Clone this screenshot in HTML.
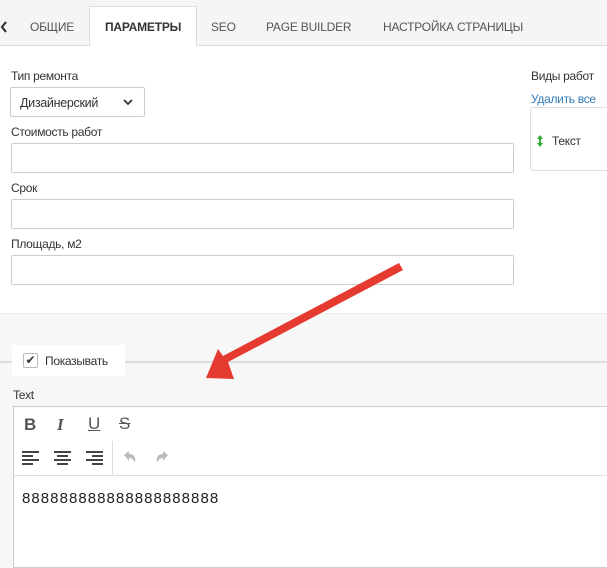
<!DOCTYPE html><html><head><meta charset="utf-8"><style>
body{margin:0;width:607px;height:559px;overflow:hidden;background:#f7f7f7;font-family:"Liberation Sans",sans-serif;position:relative;color:#333}
.a{position:absolute}
.tab{position:absolute;top:20px;font-size:12px;color:#555;letter-spacing:-0.2px}
.lbl{position:absolute;font-size:12px;color:#333;letter-spacing:-0.3px}
.inp{position:absolute;left:11px;width:501px;height:28px;border:1px solid #ccc;background:#fff;border-radius:2px}
.tb{position:absolute;font-size:17px;color:#555;font-weight:bold}
</style></head><body>
<div class="a" style="left:0;top:0;width:607px;height:45px;background:#f5f5f5;border-bottom:1px solid #ddd"></div>
<div class="a" style="left:89px;top:6px;width:106px;height:40px;background:#fff;border:1px solid #ddd;border-bottom:none"></div>
<svg class="a" style="left:0;top:21px" width="8" height="12"><path d="M6 1L2 6l4 5" stroke="#333" stroke-width="2.2" fill="none"/></svg>
<div class="tab" style="left:30px">ОБЩИЕ</div>
<div class="tab" style="left:105px;font-weight:bold;color:#333">ПАРАМЕТРЫ</div>
<div class="tab" style="left:211px">SEO</div>
<div class="tab" style="left:266px">PAGE BUILDER</div>
<div class="tab" style="left:383px">НАСТРОЙКА СТРАНИЦЫ</div>
<div class="a" style="left:0;top:46px;width:607px;height:267px;background:#fff;border-bottom:1px solid #eee"></div>
<div class="lbl" style="left:11px;top:69px">Тип ремонта</div>
<div class="a" style="left:10px;top:87px;width:133px;height:28px;border:1px solid #ccc;border-radius:2px;background:#fff;font-size:12.5px;letter-spacing:-0.3px"><span style="position:absolute;left:9px;top:8px">Дизайнерский</span></div>
<svg class="a" style="left:122px;top:98px" width="12" height="8"><path d="M2 2l4 4 4-4" stroke="#333" stroke-width="1.8" fill="none"/></svg>
<div class="lbl" style="left:11px;top:125px">Стоимость работ</div>
<div class="inp" style="top:143px"></div>
<div class="lbl" style="left:11px;top:181px">Срок</div>
<div class="inp" style="top:199px"></div>
<div class="lbl" style="left:11px;top:237px">Площадь, м2</div>
<div class="inp" style="top:255px"></div>
<div class="lbl" style="left:531px;top:69px">Виды работ</div>
<div class="lbl" style="left:531px;top:92px;color:#337ab7">Удалить все</div>
<div class="a" style="left:530px;top:107px;width:80px;height:62px;border:1px solid #ddd;border-radius:3px;background:#fff"></div>
<svg class="a" style="left:537px;top:134px" width="6" height="14"><path d="M3 1L0 5h6zM3 13L0 9h6z" fill="#3a3"/><rect x="2" y="4" width="2" height="6" fill="#3a3"/></svg>
<div class="lbl" style="left:552px;top:134px">Текст</div>
<div class="a" style="left:0;top:361px;width:607px;height:2px;background:#ddd"></div>
<div class="a" style="left:12px;top:345px;width:113px;height:31px;background:#fff"></div>
<div class="a" style="left:23px;top:353px;width:13px;height:13px;border:1px solid #bbb;border-radius:2px;background:#fff;font-size:12px;line-height:13px;text-align:center">&#x2714;</div>
<div class="lbl" style="left:45px;top:354px">Показывать</div>
<div class="lbl" style="left:13px;top:388px">Text</div>
<div class="a" style="left:13px;top:406px;width:600px;height:160px;border:1px solid #ccc;background:#fff"></div>
<div class="a" style="left:14px;top:475px;width:600px;height:1px;background:#ddd"></div>
<div class="a" style="left:112px;top:441px;width:1px;height:34px;background:#ddd"></div>
<div class="tb" style="left:24px;top:415px">B</div>
<div class="tb" style="left:57px;top:415px;font-style:italic;font-family:'Liberation Serif',serif">I</div>
<div class="tb" style="left:88px;top:414px;text-decoration:underline;font-weight:normal">U</div>
<div class="tb" style="left:119px;top:414px;text-decoration:line-through;font-weight:normal">S</div>
<svg class="a" style="left:22px;top:450px" width="160" height="16" fill="#444">
<rect x="0" y="1" width="17" height="2"/><rect x="0" y="5" width="11" height="2"/><rect x="0" y="9" width="17" height="2"/><rect x="0" y="13" width="11" height="2"/>
<rect x="32" y="1" width="17" height="2"/><rect x="35" y="5" width="11" height="2"/><rect x="32" y="9" width="17" height="2"/><rect x="35" y="13" width="11" height="2"/>
<rect x="64" y="1" width="17" height="2"/><rect x="70" y="5" width="11" height="2"/><rect x="64" y="9" width="17" height="2"/><rect x="70" y="13" width="11" height="2"/>
<path d="M102 5l5-4v3c5 0 7 3 6 9-1-3-3-5-6-5v3z" fill="#bbb"/>
<path d="M146 5l-5-4v3c-5 0-7 3-6 9 1-3 3-5 6-5v3z" fill="#bbb"/>
</svg>
<div class="a" style="left:22px;top:490px;font-size:15px;letter-spacing:1.05px;color:#222">888888888888888888888</div>
<svg class="a" style="left:0;top:0" width="607" height="559"><path d="M399 263L403 270L228 362L234 379L206 378L218 349L223 356Z" fill="#e53a2f"/></svg>
</body></html>
